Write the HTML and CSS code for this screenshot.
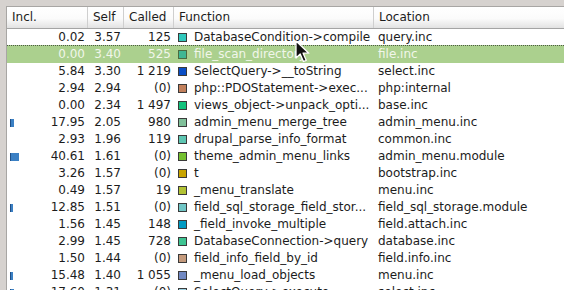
FILE: index.html
```html
<!DOCTYPE html>
<html lang="en">
<head>
    <meta charset="UTF-8">
    <title>Flat Profile</title>
    <link rel="stylesheet" href="styles.css">
</head>
<body>
    <div class="frame">
        <div class="view">
            <div class="row head">
                <div class="cell incl">Incl.</div>
                <div class="cell self">Self</div>
                <div class="cell called">Called</div>
                <div class="cell func">Function</div>
                <div class="cell loc">Location</div>
            </div>
            <div id="rows"></div>
            <svg class="cursor" width="16" height="24" viewBox="0 0 16 24">
                <path d="M1 1 L1 18 L5.2 14 L8.4 21.5 L11.2 20.3 L8.1 13.2 L13.8 13.2 Z" fill="#111" stroke="#fff" stroke-width="1.3" stroke-linejoin="round"/>
            </svg>
        </div>
    </div>

    <script>
        // incl, self, called, function, colour, location, bar width
        const entries = [
            ['0.02', '3.57', '125', 'DatabaseCondition->compile', '#30c8bc', 'query.inc', 0],
            ['0.00', '3.40', '525', 'file_scan_directory', '#3fb793', 'file.inc', 0],
            ['5.84', '3.30', '1 219', 'SelectQuery->__toString', '#0b4fc6', 'select.inc', 0],
            ['2.94', '2.94', '(0)', 'php::PDOStatement->exec...', '#c2805c', 'php:internal', 0],
            ['0.00', '2.34', '1 497', 'views_object->unpack_opti...', '#12c27c', 'base.inc', 0],
            ['17.95', '2.05', '980', 'admin_menu_merge_tree', '#80c09a', 'admin_menu.inc', 4],
            ['2.93', '1.96', '119', 'drupal_parse_info_format', '#5ec6b2', 'common.inc', 0],
            ['40.61', '1.61', '(0)', 'theme_admin_menu_links', '#74c030', 'admin_menu.module', 9],
            ['3.26', '1.57', '(0)', 't', '#c8a400', 'bootstrap.inc', 0],
            ['0.49', '1.57', '19', '_menu_translate', '#b2c234', 'menu.inc', 0],
            ['12.85', '1.51', '(0)', 'field_sql_storage_field_stor...', '#70c6c6', 'field_sql_storage.module', 3],
            ['1.56', '1.45', '148', '_field_invoke_multiple', '#009ac2', 'field.attach.inc', 0],
            ['2.99', '1.45', '728', 'DatabaseConnection->query', '#3ec492', 'database.inc', 0],
            ['1.50', '1.44', '(0)', 'field_info_field_by_id', '#c49a7c', 'field.info.inc', 0],
            ['15.48', '1.40', '1 055', '_menu_load_objects', '#7088c2', 'menu.inc', 3],
            ['17.60', '1.31', '(0)', 'SelectQuery->execute', '#9ad0e0', 'select.inc', 4]
        ];

        const rows = document.getElementById('rows');
        entries.forEach((e, i) => {
            const row = document.createElement('div');
            row.className = 'row' + (i === 1 ? ' current' : '');
            const bar = e[6] ? `<span class="bar" style="width:${e[6]}px"></span>` : '';
            row.innerHTML =
                `<div class="cell incl">${bar}${e[0]}</div>` +
                `<div class="cell self">${e[1]}</div>` +
                `<div class="cell called">${e[2]}</div>` +
                `<div class="cell func"><span class="swatch" style="background:${e[4]}"></span></div>` +
                `<div class="cell loc"></div>`;
            row.querySelector('.func').append(e[3]);
            row.querySelector('.loc').textContent = e[5];
            rows.appendChild(row);
        });
    </script>
</body>
</html>
```

FILE: styles.css
```css
html, body {
    margin: 0;
    padding: 0;
    overflow: hidden;
}
body {
    font-family: "DejaVu Sans", sans-serif;
    font-size: 12px;
    color: #1c1c1c;
    background: #d6d2cf;
    width: 564px;
    height: 290px;
}
.frame {
    padding: 6px 0 0 6px;
    height: 284px;
}
.view {
    position: relative;
    background: #fff;
    border-top: 1px solid #a8a6a4;
    border-left: 1px solid #a8a6a4;
    height: 283px;
    overflow: hidden;
}
.row {
    display: flex;
    height: 17px;
    line-height: 17px;
    white-space: nowrap;
}
.cell {
    box-sizing: border-box;
    overflow: hidden;
    flex: none;
}
.incl {
    position: relative;
    width: 81px;
    text-align: right;
    padding-right: 3px;
}
.self {
    width: 36px;
    text-align: right;
    padding-right: 3px;
}
.called {
    width: 50px;
    text-align: right;
    padding-right: 3px;
}
.func {
    width: 200px;
    padding-left: 4px;
    display: flex;
    align-items: center;
}
.loc {
    width: 200px;
    padding-left: 4px;
}
.head {
    height: 21px;
    line-height: 21px;
    background: linear-gradient(#ffffff 0%, #fbfbfb 55%, #e2e2e2 100%);
    border-bottom: 1px solid #a4a4a4;
}
.head .cell {
    text-align: left;
    padding-left: 5px;
    border-right: 1px solid #cfcfcf;
}
.head .func {
    display: block;
}
.swatch {
    display: inline-block;
    width: 7px;
    height: 7px;
    border: 1px solid #3a3a3a;
    margin-right: 7px;
    flex: none;
}
.bar {
    position: absolute;
    left: 3px;
    top: 5px;
    height: 8px;
    background: #3b80c4;
    border-left: 1px solid #1f4e86;
    box-sizing: border-box;
}
.current {
    background: #abd08e;
    color: #f1f6ea;
    border-top: 1px dotted #4d5a44;
    height: 17px;
    margin-top: -1px;
}
.current .swatch {
    border-color: #4a6a40;
}
.cursor {
    position: absolute;
    left: 288px;
    top: 33px;
}
```
